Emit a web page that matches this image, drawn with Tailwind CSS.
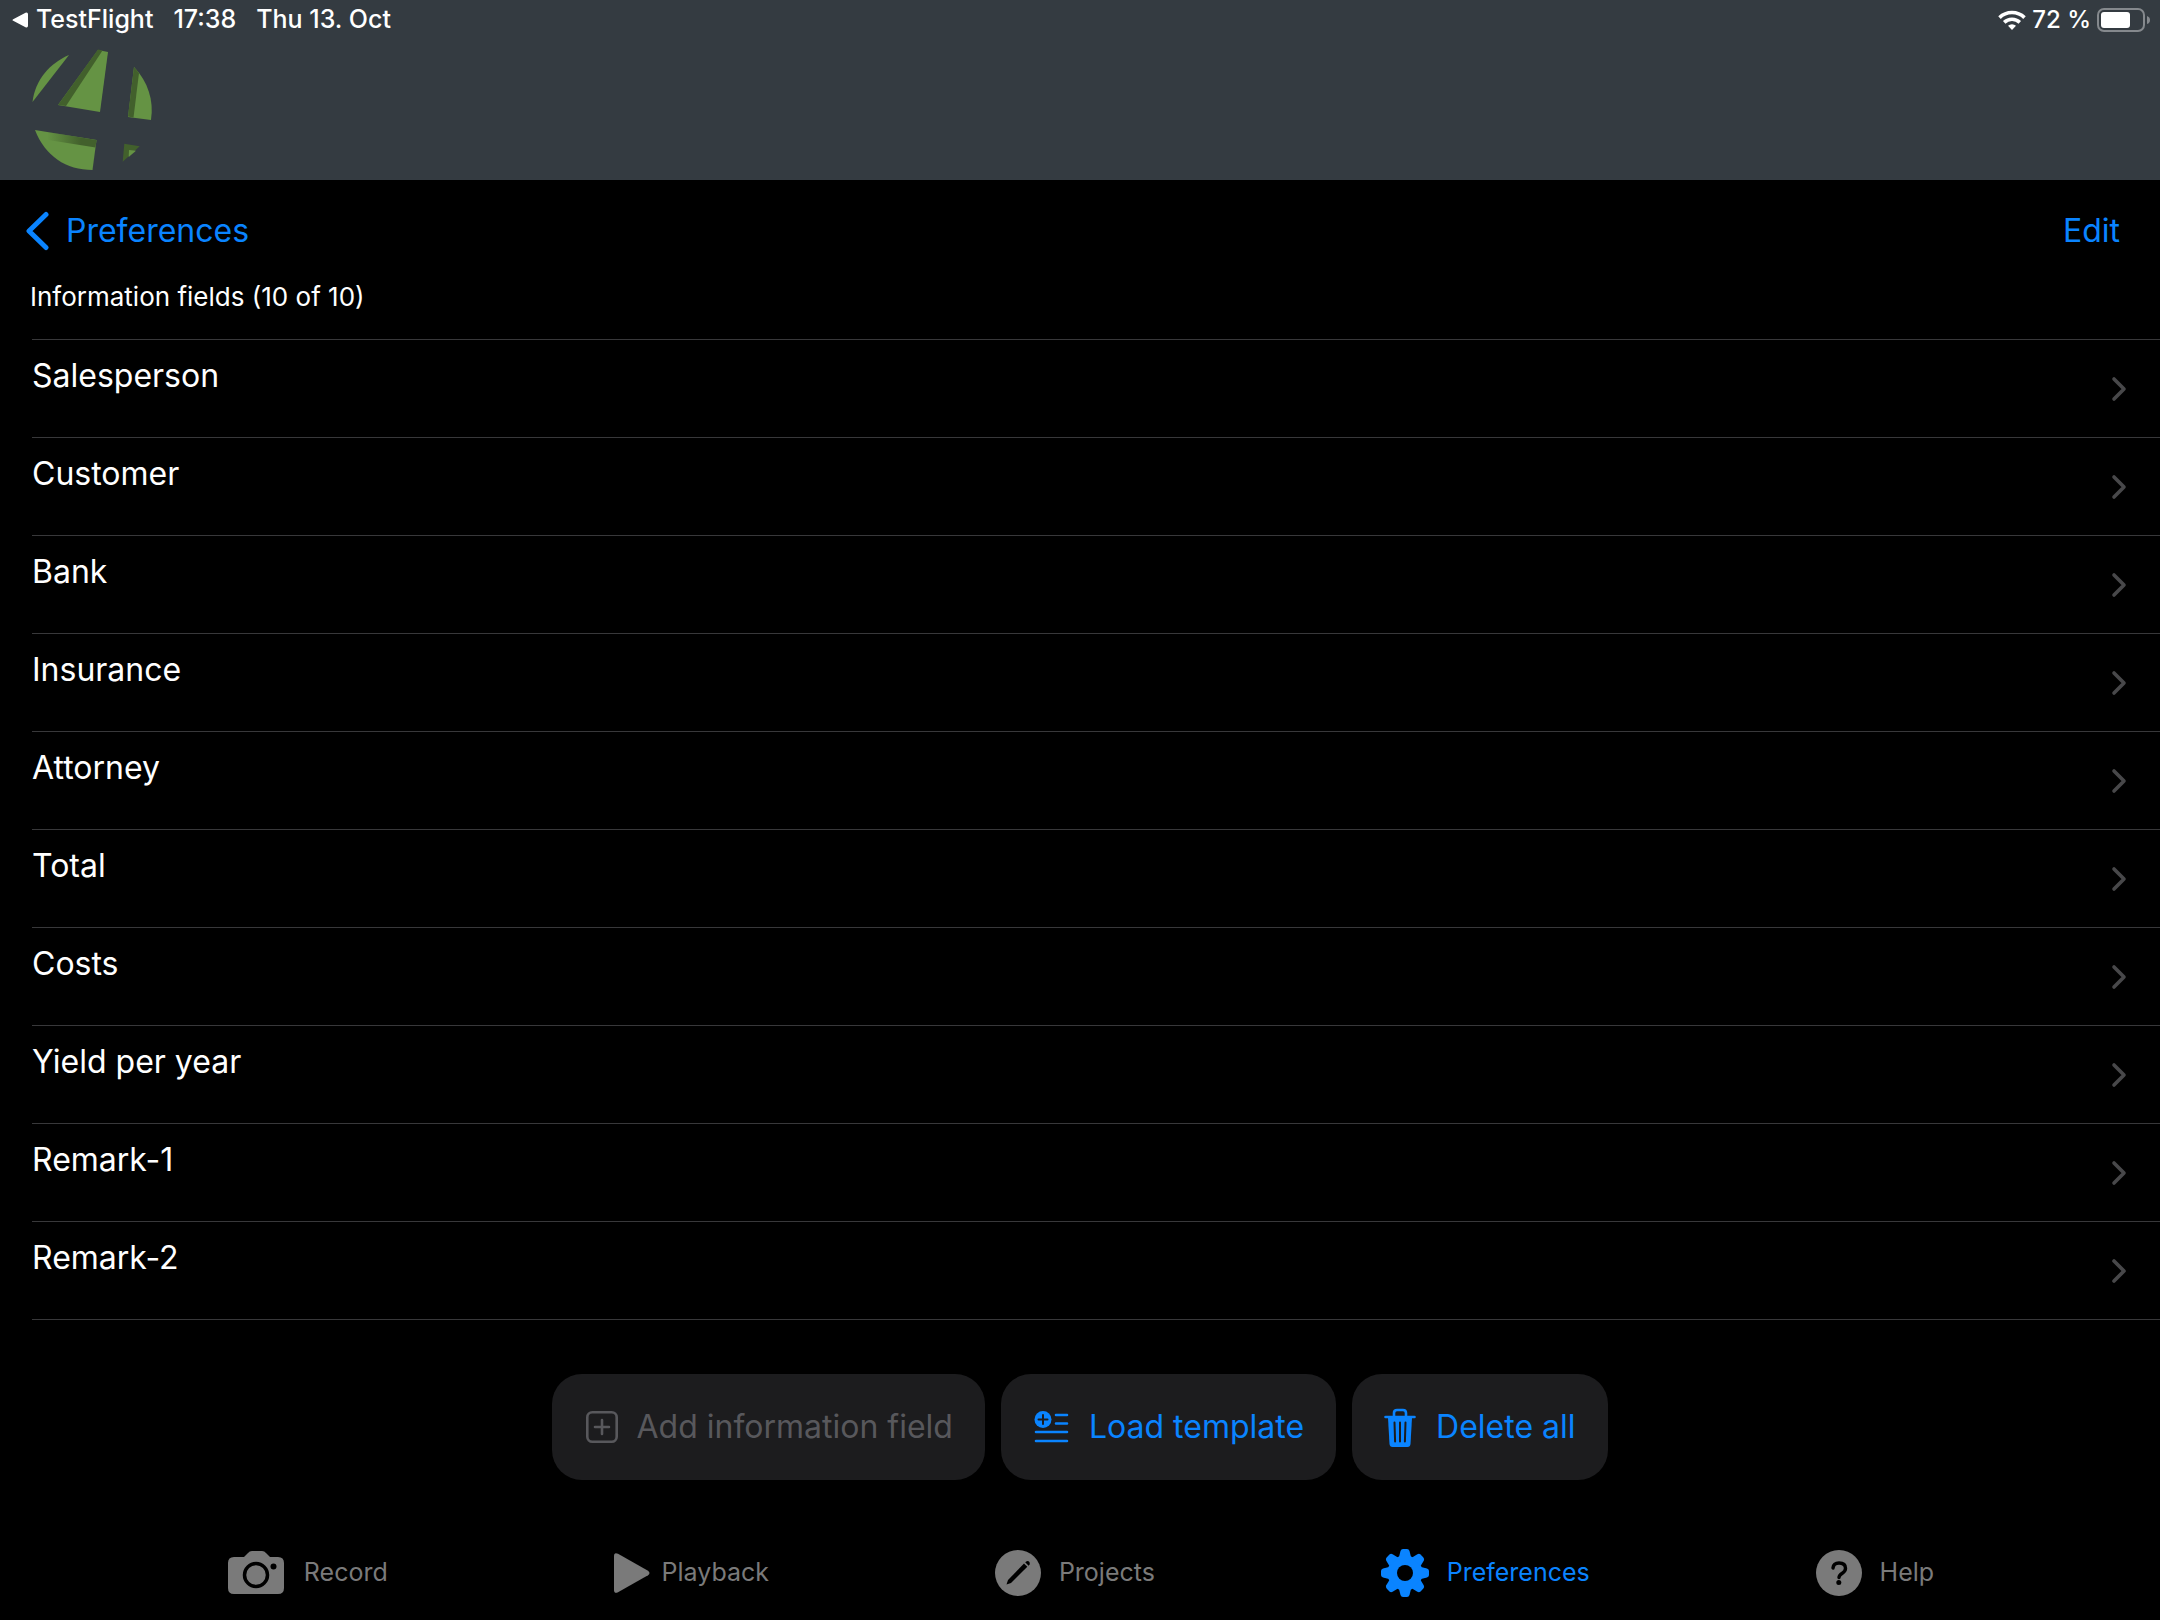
<!DOCTYPE html>
<html lang="en">
  <head>
    <meta charset="UTF-8" />
    <meta name="viewport" content="width=device-width, initial-scale=1.0" />
    <script src="https://cdn.jsdelivr.net/npm/@tailwindcss/browser@4"></script>
    <title>Information fields</title>
  </head>
  <body class="min-h-screen flex flex-col bg-black text-white font-['Inter',sans-serif]">
    <header class="bg-[#343b41] h-[180px]">
      <div class="flex items-center justify-between h-10 pl-3 pr-[10px] font-medium">
        <div class="flex items-center gap-5 text-[25px]">
          <a href="#" class="flex items-center gap-2">
            <svg class="w-4 h-4" viewBox="0 0 16 16" fill="currentColor"><path d="M1.200 7.200 13.500.8Q16 0 16 2.300v11.400q0 2.300-2.500 1.500L1.200 8.800q-1.500-.8 0-1.600z" /></svg>
            TestFlight
          </a>
          <span>17:38</span>
          <span>Thu 13. Oct</span>
        </div>
        <div class="flex items-center gap-[6px] text-2xl">
          <svg class="w-7 h-5" viewBox="0 0 28 20" fill="none" stroke="currentColor" stroke-width="3.600">
            <path d="M1.500 7.600a18 18 0 0 1 25 0" />
            <path d="M6.200 12.400a11.300 11.300 0 0 1 15.600 0" />
            <path d="M14 20l-4-4.200a6 6 0 0 1 8 0z" fill="currentColor" stroke="none" />
          </svg>
          <span>72 %</span>
          <svg class="w-[53px] h-6" viewBox="0 0 53 24" fill="none">
            <rect x="1" y="1" width="46" height="22" rx="6" stroke="#85898d" stroke-width="2" />
            <rect x="4" y="4" width="29" height="16" rx="3" fill="#fff" />
            <path d="M50 8q3 1 3 4t-3 4z" fill="#85898d" />
          </svg>
        </div>
      </div>
      <svg class="ml-8 mt-2 w-[122px] h-[124px]" viewBox="0 0 122 124">
        <defs>
          <linearGradient id="shade" x1="0" x2="1">
            <stop offset=".2" stop-color="#42602c" stop-opacity="0" />
            <stop offset=".75" stop-color="#42602c" />
          </linearGradient>
        </defs>
        <g fill="#659344">
          <path d="M37 7C18 15 3 32 .5 54z" />
          <path d="M66 2l10 2-8 60-42-7z" />
          <path d="M102 19c14 15 20 33 17 53l-23-3z" />
          <path d="M3 82l61.500 10-4 30C34 122 13 108 3 82z" />
        </g>
        <g fill="#42602c">
          <path d="M66 1.500l4.500 1L34 58l-8-1z" />
          <path d="M102 19l5 6-5.500 44.500-5.500-1z" />
          <path d="M92.300 95.700l15.400 2.600-17 15.400z" />
        </g>
        <path d="M3 82l61.500 10-1 7.500L10 91z" fill="url(#shade)" />
        <path d="M97 102l7 .700-7.300 6.300z" fill="#659344" />
      </svg>
    </header>

    <nav class="flex items-center justify-between h-[102px] pl-[26px] pr-10 text-[32px] text-[#0a84ff]">
      <a href="#" class="flex items-center gap-4">
        <svg class="w-6 h-10" viewBox="0 0 24 40" fill="none" stroke="currentColor" stroke-width="5" stroke-linecap="round" stroke-linejoin="round"><path d="M20 3.500 3 20l17 16.500" /></svg>
        Preferences
      </a>
      <button type="button">Edit</button>
    </nav>

    <main class="flex flex-col">
      <h1 class="h-[57px] px-[30px] text-[26px] leading-[30px]">Information fields (10 of 10)</h1>
      <ul id="fields" class="ml-8 border-t border-[#38383a]"></ul>
      <div class="flex justify-center gap-4 mt-[54px] text-[32px] text-[#0a84ff]">
        <button type="button" disabled class="flex items-center gap-4 h-[106px] px-8 rounded-[30px] bg-[#1c1c1e] text-[#58585c]">
          <svg class="w-9 h-9" viewBox="0 0 36 36" fill="none" stroke="currentColor" stroke-width="2.600" stroke-linecap="round">
            <rect x="3.300" y="3.300" width="29.400" height="29.400" rx="5" />
            <path d="M18 11v14M11 18h14" />
          </svg>
          Add information field
        </button>
        <button type="button" class="flex items-center gap-5 h-[106px] px-8 rounded-[30px] bg-[#1c1c1e]">
          <svg class="w-9 h-9" viewBox="0 0 36 36" fill="none" stroke="currentColor" stroke-width="2.600" stroke-linecap="round">
            <circle cx="10" cy="10.500" r="8.500" fill="currentColor" stroke="none" />
            <path d="M10 6v9M5.500 10.500h9" stroke="#1c1c1e" stroke-width="2" />
            <path d="M23 6h11M23 14.500h11M3 23h31M3 32h31" />
          </svg>
          Load template
        </button>
        <button type="button" class="flex items-center gap-5 h-[106px] px-8 rounded-[30px] bg-[#1c1c1e]">
          <svg class="w-8 h-10" viewBox="2 0 32 40" fill="none" stroke="currentColor" stroke-width="2.600" stroke-linecap="round">
            <path d="M3.500 10h29M12 9V6q0-3 3-3h6q3 0 3 3v3" />
            <path d="M6 11h24l-1.500 26q-.3 3-3 3h-15q-2.700 0-3-3z" fill="currentColor" stroke="none" />
            <path d="M12.500 15.500l.6 19M18 15.500v19M23.500 15.500l-.6 19" stroke="#1c1c1e" stroke-width="2" />
          </svg>
          Delete all
        </button>
      </div>
    </main>

    <footer class="mt-auto flex items-center justify-evenly h-[94px] text-[25px] text-[#7a7a7a]">
      <a href="#" class="flex items-center gap-[18px]">
        <svg class="w-[60px] h-12" viewBox="0 0 60 48">
          <path d="M8 8h10l4-4q1.500-2 4-2h10q2.500 0 4 2l4 4h8q6 0 6 6v25q0 6-6 6H8q-6 0-6-6V14q0-6 6-6z" fill="currentColor" />
          <circle cx="30" cy="26" r="11.500" fill="none" stroke="#000" stroke-width="3.500" />
          <circle cx="47.500" cy="17.500" r="3" fill="#000" />
        </svg>
        Record
      </a>
      <a href="#" class="flex items-center gap-3">
        <svg class="w-9 h-10" viewBox="0 0 36 40" fill="currentColor"><path d="M0 3q0-4 4-2.300l30 17q3 2.300 0 4.600l-30 17Q0 41 0 37z" /></svg>
        Playback
      </a>
      <a href="#" class="flex items-center gap-[18px]">
        <svg class="w-[46px] h-[46px]" viewBox="0 0 46 46">
          <circle cx="23" cy="23" r="23" fill="currentColor" />
          <path d="M29 13.500l3.300 3.300L16 33l-4.500 1.500L13 30z" />
          <path d="M30.200 12.300l1.500-1q1.500-.6 2.500.4t.4 2.500l-1 1.500z" />
        </svg>
        Projects
      </a>
      <a href="#" class="flex items-center gap-[18px] text-[#0a84ff]">
        <svg class="w-12 h-12" viewBox="0 0 48 48"><g id="gear" fill="currentColor"></g><circle cx="24" cy="24" r="8" fill="#000" /></svg>
        Preferences
      </a>
      <a href="#" class="flex items-center gap-[18px]">
        <svg class="w-[46px] h-[46px]" viewBox="0 0 46 46">
          <circle cx="23" cy="23" r="23" fill="currentColor" />
          <path d="M17 18q.5-5 6-5 6.500 0 6.500 5.300 0 3-3.200 4.900-3.300 2-3.300 4.300" fill="none" stroke="#000" stroke-width="3.400" stroke-linecap="round" />
          <circle cx="22.800" cy="32.500" r="2.500" />
        </svg>
        Help
      </a>
    </footer>
  </body>
  <script>
    const fields = ["Salesperson", "Customer", "Bank", "Insurance", "Attorney", "Total", "Costs", "Yield per year", "Remark-1", "Remark-2"];
    document.getElementById("fields").innerHTML = fields
      .map(
        (name) => `
        <li class="h-[98px] border-b border-[#38383a]">
          <a href="#" class="flex justify-between h-full pr-[33px]">
            <span class="pt-[14px] leading-[44px] text-[32px]">${name}</span>
            <svg class="self-center w-4 h-7" viewBox="0 0 16 28" fill="none" stroke="#48484a" stroke-width="3.600" stroke-linecap="round" stroke-linejoin="round"><path d="M3 4l10 10L3 24" /></svg>
          </a>
        </li>`
      )
      .join("");

    // eight teeth around the hub
    const gear = document.getElementById("gear");
    let teeth = '<circle cx="24" cy="24" r="17.500" />';
    for (let i = 0; i < 8; i++) {
      teeth += `<path d="M18 8l1.500-6q.6-2 2.500-2h4q1.900 0 2.500 2l1.500 6z" transform="rotate(${i * 45} 24 24)" />`;
    }
    gear.innerHTML = teeth;
  </script>
</html>
